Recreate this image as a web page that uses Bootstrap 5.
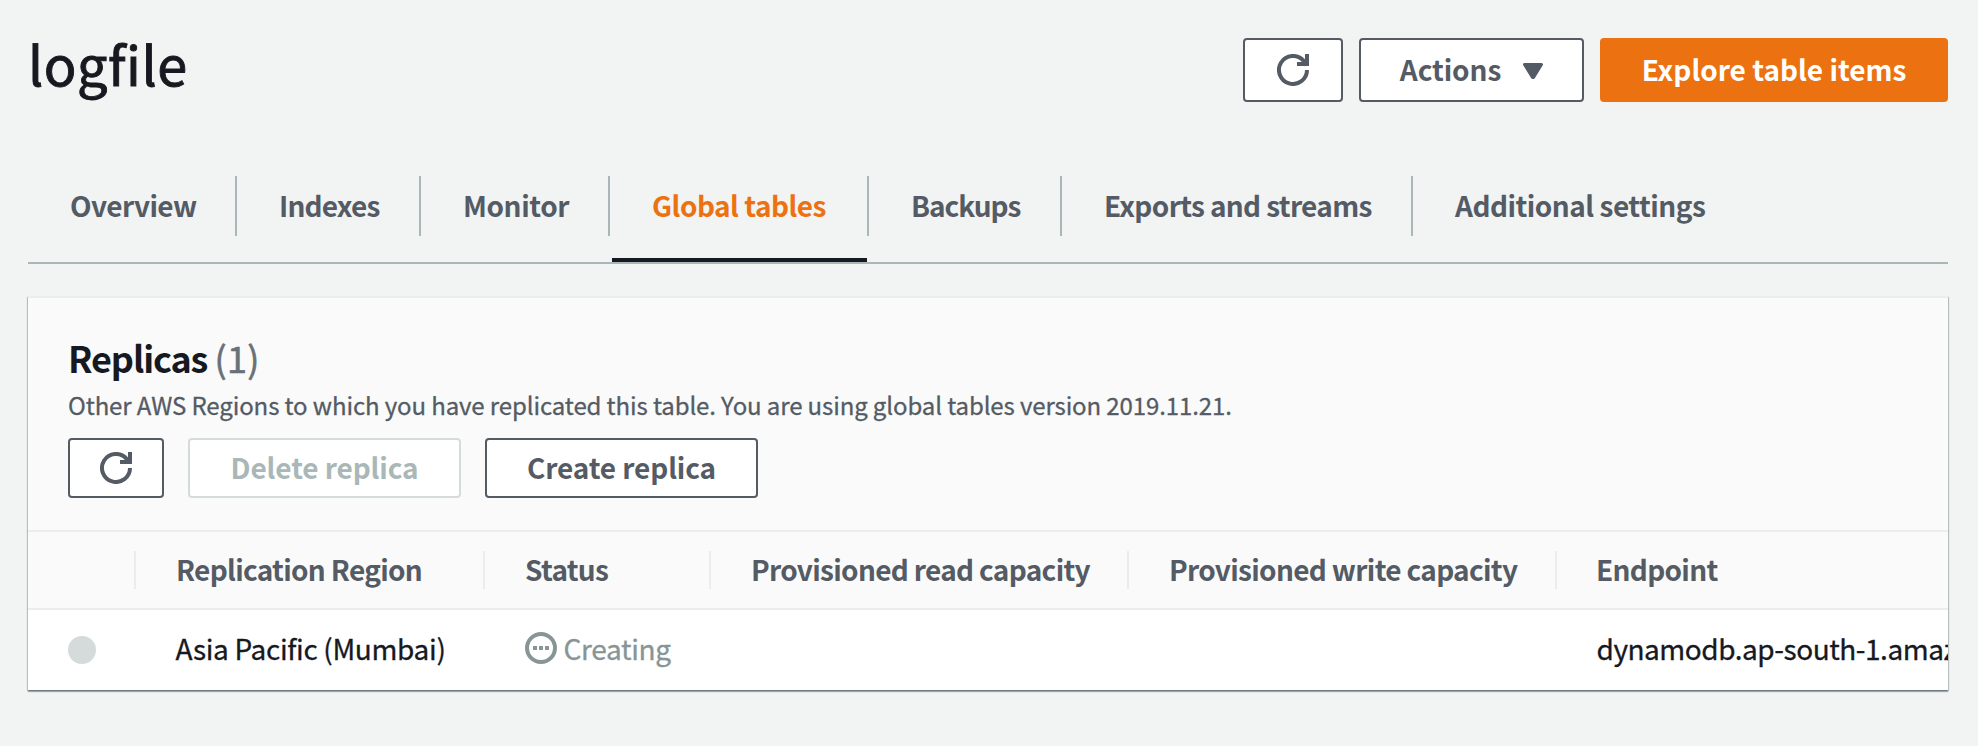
<!DOCTYPE html>
<html lang="en">
<head>
<meta charset="utf-8">
<meta name="viewport" content="width=device-width, initial-scale=1">
<title>logfile</title>
<link href="https://cdn.jsdelivr.net/npm/bootstrap@5.3.0/dist/css/bootstrap.min.css" rel="stylesheet">
<style>
  body { background: #f2f3f3; color: #16191f; font: 400 28px/36px "Noto Sans CJK SC", "Noto Sans", sans-serif; min-height: 100vh; -webkit-text-stroke: .3px currentColor; }
  .page { padding: 38px 30px 40px 28px; }
  .page-title { font-size: 54px; line-height: 64px; font-weight: 400; letter-spacing: .5px; margin-top: -7px; -webkit-text-stroke-width: .9px; }
  .top-row { height: 64px; }
  .btn-aws { --bs-btn-bg: #fff; --bs-btn-color: #545b64; --bs-btn-border-color: #545b64; --bs-btn-border-width: 2px;
    --bs-btn-disabled-bg: #fff; --bs-btn-disabled-color: #aab7b8; --bs-btn-disabled-border-color: #d5dbdb; --bs-btn-disabled-opacity: 1;
    --bs-btn-border-radius: 4px; --bs-btn-font-weight: 700; --bs-btn-font-size: 28px; --bs-btn-line-height: 36px;
    -webkit-text-stroke: 0; padding: 0 0 3px; height: 60px; white-space: nowrap; display: inline-flex; align-items: center; justify-content: center; letter-spacing: -.1px; }
  .btn-accent { --bs-btn-bg: #ec7211; --bs-btn-color: #fff; --bs-btn-border-color: #ec7211; letter-spacing: 0; }
  .top-row .btn-aws { height: 64px; }
  .w-refresh { width: 100px; } .w-actions { width: 225px; } .w-explore { width: 348px; }
  .w-refresh-sm { width: 96px; } .w-replica { width: 273px; }
  .btn-icon { padding-bottom: 0; }
  .caret-icon { margin: 4px 0 0 22px; }

  .tab-bar { margin-top: 74px; height: 88px; border-bottom: 2px solid #aab7b8; }
  .tab-bar .nav-item { height: 60px; border-right: 2px solid #aab7b8; letter-spacing: -.5px; -webkit-text-stroke: 0; }
  .tab-bar .nav-item:last-child { border: 0; }
  .tab-bar .nav-link { color: #545b64; font-weight: 700; padding: 11px 0 13px 42px; white-space: nowrap; position: relative; }
  .tab-bar .nav-link.active { color: #ec7211; }
  .tab-bar .nav-link.active::after { content: ""; position: absolute; left: 2px; right: 0; bottom: -26px; height: 4px; background: #16191f; }
  .tab-bar .t1 { width: 209px; letter-spacing: -.6px; } .tab-bar .t2 { width: 184px; letter-spacing: -.8px; } .tab-bar .t3 { width: 189px; letter-spacing: -.4px; }
  .tab-bar .t4 { width: 259px; } .tab-bar .t5 { width: 193px; letter-spacing: -1px; } .tab-bar .t6 { width: 351px; letter-spacing: -.65px; }

  .panel { margin-top: 32px; height: 394px; border: 0; border-top: 2px solid #eaeded; border-radius: 0; background: #fff;
    box-shadow: 0 2px 1px 0 rgba(0,28,36,.3), 1px 1px 1px 0 rgba(0,28,36,.2), -1px 1px 1px 0 rgba(0,28,36,.2); }
  .panel-head { background: #fafafa; height: 234px; padding: 37px 40px 0; border-bottom: 2px solid #eaeded; }
  .panel-head h2 { font-size: 36px; line-height: 44px; font-weight: 700; letter-spacing: -1.1px; color: #16191f; -webkit-text-stroke: 0; }
  .count { font-weight: 400; color: #687078; letter-spacing: .4px; -webkit-text-stroke: .6px #687078; }
  .desc { font-size: 24px; line-height: 32px; color: #545b64; letter-spacing: -.11px; padding-top: 10px; }
  .actions-row { margin-top: 17px; gap: 24px; }
  .replicas { --bs-table-bg: #fff; --bs-table-color: #16191f; width: 2229px; table-layout: fixed; border-collapse: separate; border-spacing: 0; }
  .replicas > :not(caption) > * > * { padding: 0; border: 0; vertical-align: middle; }
  .replicas > thead > tr > th { --bs-table-bg: #fafafa; --bs-table-color: #545b64; height: 78px; border-bottom: 2px solid #eaeded; font-weight: 700; letter-spacing: -.68px; -webkit-text-stroke: 0; }
  .col-label { height: 38px; line-height: 36px; padding-left: 40px; border-right: 2px solid #eaeded; white-space: nowrap; color: #545b64; }
  th:last-child .col-label { border: 0; padding-left: 39px; }
  .replicas > tbody > tr > td { height: 80px; padding: 0 0 4px 39.5px; white-space: nowrap; letter-spacing: -.33px; }
  .replicas > tbody > tr > .pick { padding: 0 0 0 40px; }
  .replicas > tbody > tr > .endpoint { letter-spacing: -.48px; }
  .radio-dot { width: 28px; height: 28px; border-radius: 50%; background: #d5dbdb; }
  .state { color: #879596; gap: 7px; -webkit-text-stroke-color: #879596; }
  svg { -webkit-text-stroke: 0; flex: none; }
</style>
</head>
<body>
<main class="page">
  <header class="top-row d-flex justify-content-between">
    <h1 class="page-title mb-0">logfile</h1>
    <div class="d-flex gap-3">
      <button class="btn btn-aws btn-icon w-refresh" aria-label="Refresh">
        <svg width="32" height="32" viewBox="0 0 32 32" fill="none" stroke="currentColor" stroke-width="4"><path d="M30 16a14 14 0 1 1-3.6-9.4L29 10"/><path d="M30 0v10H20"/></svg>
      </button>
      <button class="btn btn-aws w-actions">Actions
        <svg class="caret-icon" width="20" height="16" viewBox="0 0 20 16"><path d="M1.500 1.500h17L10.500 14.500h-1z" fill="currentColor" stroke="currentColor" stroke-width="3" stroke-linejoin="round"/></svg>
      </button>
      <button class="btn btn-aws btn-accent w-explore">Explore table items</button>
    </div>
  </header>

  <ul class="nav tab-bar flex-nowrap">
    <li class="nav-item t1"><a class="nav-link" href="#">Overview</a></li>
    <li class="nav-item t2"><a class="nav-link" href="#">Indexes</a></li>
    <li class="nav-item t3"><a class="nav-link" href="#">Monitor</a></li>
    <li class="nav-item t4"><a class="nav-link active" href="#">Global tables</a></li>
    <li class="nav-item t5"><a class="nav-link" href="#">Backups</a></li>
    <li class="nav-item t6"><a class="nav-link" href="#">Exports and streams</a></li>
    <li class="nav-item"><a class="nav-link" href="#">Additional settings</a></li>
  </ul>

  <section class="card panel">
    <div class="overflow-hidden h-100">
      <div class="panel-head">
        <h2 class="mb-0">Replicas <span class="count">(1)</span></h2>
        <p class="desc mb-0">Other AWS Regions to which you have replicated this table. You are using global tables version 2019.11.21.</p>
        <div class="actions-row d-flex">
          <button class="btn btn-aws btn-icon w-refresh-sm" aria-label="Refresh replicas">
            <svg width="32" height="32" viewBox="0 0 32 32" fill="none" stroke="currentColor" stroke-width="4"><path d="M30 16a14 14 0 1 1-3.6-9.4L29 10"/><path d="M30 0v10H20"/></svg>
          </button>
          <button class="btn btn-aws w-replica" disabled>Delete replica</button>
          <button class="btn btn-aws w-replica">Create replica</button>
        </div>
      </div>
      <table class="table replicas mb-0">
        <colgroup><col style="width:108px"><col style="width:349px"><col style="width:226px"><col style="width:418px"><col style="width:428px"><col style="width:700px"></colgroup>
        <thead>
          <tr>
            <th><div class="col-label"></div></th>
            <th><div class="col-label">Replication Region</div></th>
            <th><div class="col-label">Status</div></th>
            <th><div class="col-label">Provisioned read capacity</div></th>
            <th><div class="col-label">Provisioned write capacity</div></th>
            <th><div class="col-label">Endpoint</div></th>
          </tr>
        </thead>
        <tbody>
          <tr>
            <td class="pick"><div class="radio-dot"></div></td>
            <td>Asia Pacific (Mumbai)</td>
            <td><div class="d-flex align-items-center state">
              <svg width="32" height="32" viewBox="0 0 32 32"><circle cx="16" cy="16" r="14" fill="none" stroke="currentColor" stroke-width="4"/><path d="M8 14h4v4H8zM14 14h4v4h-4zM20 14h4v4h-4z" fill="currentColor"/></svg>
              Creating</div></td>
            <td></td>
            <td></td>
            <td class="endpoint">dynamodb.ap-south-1.amaz</td>
          </tr>
        </tbody>
      </table>
    </div>
  </section>
</main>
<script src="https://cdn.jsdelivr.net/npm/bootstrap@5.3.0/dist/js/bootstrap.bundle.min.js"></script>
</body>
</html>
